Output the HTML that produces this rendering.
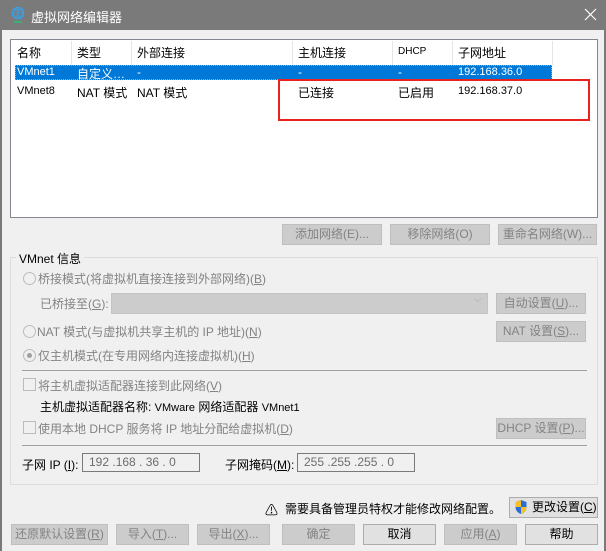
<!DOCTYPE html><html><head><meta charset="utf-8"><style>
*{box-sizing:border-box;margin:0;padding:0}
body{width:606px;height:551px;background:#f0f0f0;font-family:"Liberation Sans","Noto Sans CJK SC",sans-serif;font-size:12px;color:#000;position:relative;overflow:hidden}
.a{position:absolute;white-space:nowrap}
.btn{position:absolute;height:21px;border:1px solid #bfbfbf;background:#cccccc;color:#838383;text-align:center;line-height:19px}
.btn.en{background:#e1e1e1;border-color:#adadad;color:#000}
.g{color:#838383}
.radio{position:absolute;width:13px;height:13px;border:1px solid #bcbcbc;border-radius:50%;background:#f0f0f0}
.cb{position:absolute;width:13px;height:13px;border:1px solid #bcbcbc;background:#f0f0f0}
.inp{position:absolute;height:19px;border:1px solid #7a7a7a;background:#f0f0f0;color:#6d6d6d;line-height:17px;padding-left:6px}
.sep{position:absolute;height:1px;background:#a0a0a0;left:22px;width:565px}
</style></head><body>
<div class="a" style="left:0;top:0;width:606px;height:30px;background:#7a7a7a"></div>
<div class="a" style="left:0;top:30px;width:2px;height:521px;background:#7a7a7a"></div>
<div class="a" style="left:604px;top:30px;width:2px;height:521px;background:#7a7a7a"></div>
<svg class="a" style="left:10px;top:6px" width="16" height="18" viewBox="0 0 16 18"><circle cx="8" cy="7" r="5.5" fill="none" stroke="#3aa0e0" stroke-width="1.6"/><path d="M2.5 7h11M8 1.5v11M4 4h8M4 10h8" stroke="#3aa0e0" stroke-width="1"/><path d="M4 16h8" stroke="#2dbf7f" stroke-width="1.6"/></svg>
<div class="a" style="left:31px;top:7px;color:#fff;font-size:13px">虚拟网络编辑器</div>
<svg class="a" style="left:584px;top:8px" width="13" height="13" viewBox="0 0 13 13"><path d="M1 1L12 12M12 1L1 12" stroke="#fff" stroke-width="1.2"/></svg>

<div class="a" style="left:10px;top:39px;width:588px;height:179px;background:#fff;border:1px solid #828790"></div>
<div class="a" style="left:11px;top:40px;width:586px;height:25px;background:#fff"></div>
<div class="a" style="left:71px;top:41px;width:1px;height:24px;background:#e5e5e5"></div>
<div class="a" style="left:131px;top:41px;width:1px;height:24px;background:#e5e5e5"></div>
<div class="a" style="left:292px;top:41px;width:1px;height:24px;background:#e5e5e5"></div>
<div class="a" style="left:392px;top:41px;width:1px;height:24px;background:#e5e5e5"></div>
<div class="a" style="left:452px;top:41px;width:1px;height:24px;background:#e5e5e5"></div>
<div class="a" style="left:552px;top:41px;width:1px;height:24px;background:#e5e5e5"></div>
<div class="a" style="left:17px;top:44px">名称</div>
<div class="a" style="left:77px;top:44px">类型</div>
<div class="a" style="left:137px;top:44px">外部连接</div>
<div class="a" style="left:298px;top:44px">主机连接</div>
<div class="a" style="left:398px;top:46px;font-size:10px">DHCP</div>
<div class="a" style="left:458px;top:44px">子网地址</div>
<div class="a" style="left:15px;top:65px;width:537px;height:15px;background:#0078d7;border:1px dotted #f39b2c"></div>
<div class="a" style="left:17px;top:66px;color:#fff;font-size:11px">VMnet1</div>
<div class="a" style="left:77px;top:65px;color:#fff">自定义…</div>
<div class="a" style="left:137px;top:65px;color:#fff">-</div>
<div class="a" style="left:298px;top:65px;color:#fff">-</div>
<div class="a" style="left:398px;top:65px;color:#fff">-</div>
<div class="a" style="left:458px;top:66px;color:#fff;font-size:11px">192.168.36.0</div>
<div class="a" style="left:17px;top:85px;font-size:11px">VMnet8</div>
<div class="a" style="left:77px;top:84px">NAT 模式</div>
<div class="a" style="left:137px;top:84px">NAT 模式</div>
<div class="a" style="left:298px;top:84px">已连接</div>
<div class="a" style="left:398px;top:84px">已启用</div>
<div class="a" style="left:458px;top:85px;font-size:11px">192.168.37.0</div>
<div class="a" style="left:278px;top:79px;width:312px;height:42px;border:2px solid #e8231d"></div>

<div class="btn" style="left:282px;top:224px;width:100px">添加网络(E)...</div>
<div class="btn" style="left:390px;top:224px;width:100px">移除网络(O)</div>
<div class="btn" style="left:498px;top:224px;width:99px">重命名网络(W)...</div>

<div class="a" style="left:10px;top:257px;width:588px;height:228px;border:1px solid #dcdcdc"></div>
<div class="a" style="left:16px;top:250px;background:#f0f0f0;padding:0 3px">VMnet 信息</div>
<div class="radio" style="left:23px;top:272px"></div>
<div class="a g" style="left:38px;top:270px">桥接模式(将虚拟机直接连接到外部网络)(<u>B</u>)</div>
<div class="a g" style="left:40px;top:295px">已桥接至(<u>G</u>):</div>
<div class="a" style="left:111px;top:293px;width:377px;height:21px;background:#cccccc;border:1px solid #c4c4c4"></div>
<div class="a" style="left:474px;top:294px;color:#aaa;font-size:10px">⌵</div>
<div class="btn" style="left:496px;top:293px;width:90px">自动设置(<u>U</u>)...</div>
<div class="radio" style="left:23px;top:325px"></div>
<div class="a g" style="left:37px;top:323px">NAT 模式(与虚拟机共享主机的 IP 地址)(<u>N</u>)</div>
<div class="btn" style="left:496px;top:321px;width:90px">NAT 设置(<u>S</u>)...</div>
<div class="radio" style="left:23px;top:349px"><div style="position:absolute;left:3px;top:3px;width:5px;height:5px;border-radius:50%;background:#a0a0a0"></div></div>
<div class="a g" style="left:38px;top:347px">仅主机模式(在专用网络内连接虚拟机)(<u>H</u>)</div>
<div class="sep" style="top:370px"></div>
<div class="cb" style="left:23px;top:378px"></div>
<div class="a g" style="left:38px;top:377px">将主机虚拟适配器连接到此网络(<u>V</u>)</div>
<div class="a" style="left:40px;top:398px">主机虚拟适配器名称: <span style="font-size:11px">VMware</span> 网络适配器 <span style="font-size:11px">VMnet1</span></div>
<div class="cb" style="left:23px;top:421px"></div>
<div class="a g" style="left:38px;top:420px">使用本地 DHCP 服务将 IP 地址分配给虚拟机(<u>D</u>)</div>
<div class="btn" style="left:496px;top:418px;width:90px">DHCP 设置(<u>P</u>)...</div>
<div class="sep" style="top:445px"></div>
<div class="a" style="left:22px;top:456px">子网 IP (<u>I</u>):</div>
<div class="inp" style="left:82px;top:453px;width:118px">192 .168 . 36 . 0</div>
<div class="a" style="left:225px;top:456px">子网掩码(<u>M</u>):</div>
<div class="inp" style="left:297px;top:453px;width:118px">255 .255 .255 . 0</div>

<div class="a" style="left:265px;top:500px;font-size:13px">⚠</div>
<div class="a" style="left:285px;top:500px">需要具备管理员特权才能修改网络配置。</div>
<div class="btn en" style="left:509px;top:497px;width:89px;text-align:left;padding-left:22px">更改设置(<u>C</u>)</div>
<svg class="a" style="left:514px;top:499px" width="14" height="16" viewBox="0 0 14 16"><path d="M7 1L1.5 3v5c0 3.5 2.5 6 5.5 7 3-1 5.5-3.5 5.5-7V3z" fill="#2a6fd4"/><path d="M7 1v7H1.5V3zM7 8h5.5c0 3.5-2.5 6-5.5 7z" fill="#f5c02a"/></svg>

<div class="btn" style="left:11px;top:524px;width:97px">还原默认设置(<u>R</u>)</div>
<div class="btn" style="left:116px;top:524px;width:73px">导入(<u>T</u>)...</div>
<div class="btn" style="left:197px;top:524px;width:73px">导出(<u>X</u>)...</div>
<div class="btn" style="left:282px;top:524px;width:73px">确定</div>
<div class="btn en" style="left:363px;top:524px;width:73px">取消</div>
<div class="btn" style="left:444px;top:524px;width:73px">应用(<u>A</u>)</div>
<div class="btn en" style="left:525px;top:524px;width:73px">帮助</div>
</body></html>
